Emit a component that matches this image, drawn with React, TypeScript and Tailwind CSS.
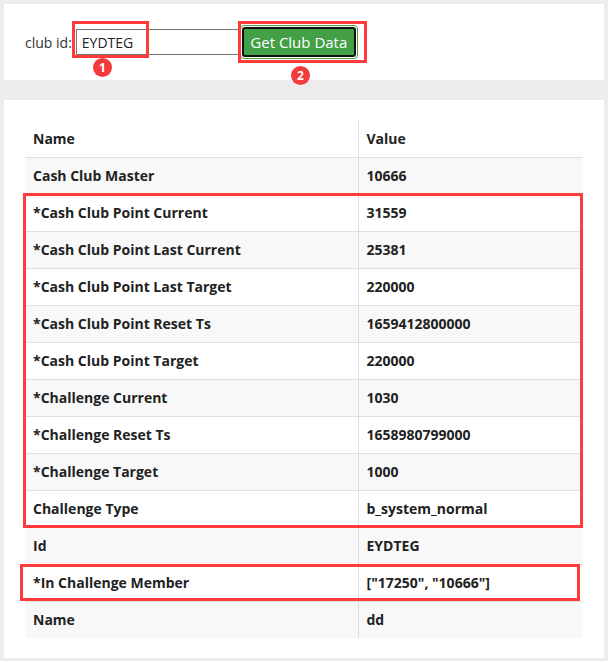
import React from 'react';

interface Row {
    name: string;
    value: string;
}

const rows: Row[] = [
    { name: 'Cash Club Master', value: '10666' },
    { name: '*Cash Club Point Current', value: '31559' },
    { name: '*Cash Club Point Last Current', value: '25381' },
    { name: '*Cash Club Point Last Target', value: '220000' },
    { name: '*Cash Club Point Reset Ts', value: '1659412800000' },
    { name: '*Cash Club Point Target', value: '220000' },
    { name: '*Challenge Current', value: '1030' },
    { name: '*Challenge Reset Ts', value: '1658980799000' },
    { name: '*Challenge Target', value: '1000' },
    { name: 'Challenge Type', value: 'b_system_normal' },
    { name: 'Id', value: 'EYDTEG' },
    { name: '*In Challenge Member', value: '["17250", "10666"]' },
    { name: 'Name', value: 'dd' },
];

// red numbered bubble used by the screenshot annotations
const Marker: React.FC<{ n: string; className: string }> = ({ n, className }) => (
    <span
        className={`absolute w-[19px] h-[19px] rounded-full bg-[#f23b3b] text-white text-[12px] font-bold leading-[19px] text-center ${className}`}
    >
        {n}
    </span>
);

export default function App() {
    return (
        <div className="min-h-screen bg-[#ececec] p-1 font-['Open_Sans',sans-serif] text-[#222]">
            {/* search bar */}
            <div className="relative h-[76px] bg-white flex items-center px-[21px]">
                <span className="text-[14px] text-[#333]">club id:</span>
                <input
                    type="text"
                    defaultValue="EYDTEG"
                    className="ml-[4px] w-[164px] h-[26px] border border-[#767676] px-[5px] text-[14px] text-[#222] outline-none"
                />
                <span className="flex rounded-[4px] border border-[#4a9e45] bg-white p-px">
                    <button className="w-[114px] h-[30px] rounded-[3px] border-2 border-[#111] bg-[#43a047] text-white text-[15px] leading-none">
                        Get Club Data
                    </button>
                </span>

                <div className="absolute left-[68px] top-[17px] w-[77px] h-[37px] border-[3px] border-[#ff3b3b]" />
                <div className="absolute left-[234px] top-[17px] w-[129px] h-[42px] border-[3px] border-[#ff3b3b]" />
                <Marker n="1" className="left-[89px] top-[54px]" />
                <Marker n="2" className="left-[287px] top-[62px]" />
            </div>

            {/* result table */}
            <div className="relative mt-5 bg-white px-[21px] py-5">
                <table className="w-full border-collapse text-[14px] font-bold">
                    <thead>
                        <tr className="h-[37px] bg-white">
                            <th className="w-[333px] border-r border-[#dedede] px-2 text-left font-bold">Name</th>
                            <th className="px-2 text-left font-bold">Value</th>
                        </tr>
                    </thead>
                    <tbody>
                        {rows.map((row, i) => (
                            <tr
                                key={i}
                                className={`h-[37px] border-t border-[#dedede] ${i % 2 === 0 ? 'bg-[#f8f8f8]' : 'bg-white'}`}
                            >
                                <td className="border-r border-[#dedede] px-2">{row.name}</td>
                                <td className="px-2">{row.value}</td>
                            </tr>
                        ))}
                    </tbody>
                </table>

                <div className="absolute left-[19px] top-[93px] w-[560px] h-[335px] border-[3px] border-[#ff3b3b]" />
                <div className="absolute left-[16px] top-[464px] w-[560px] h-[37px] border-[3px] border-[#ff3b3b]" />
            </div>
        </div>
    );
}
